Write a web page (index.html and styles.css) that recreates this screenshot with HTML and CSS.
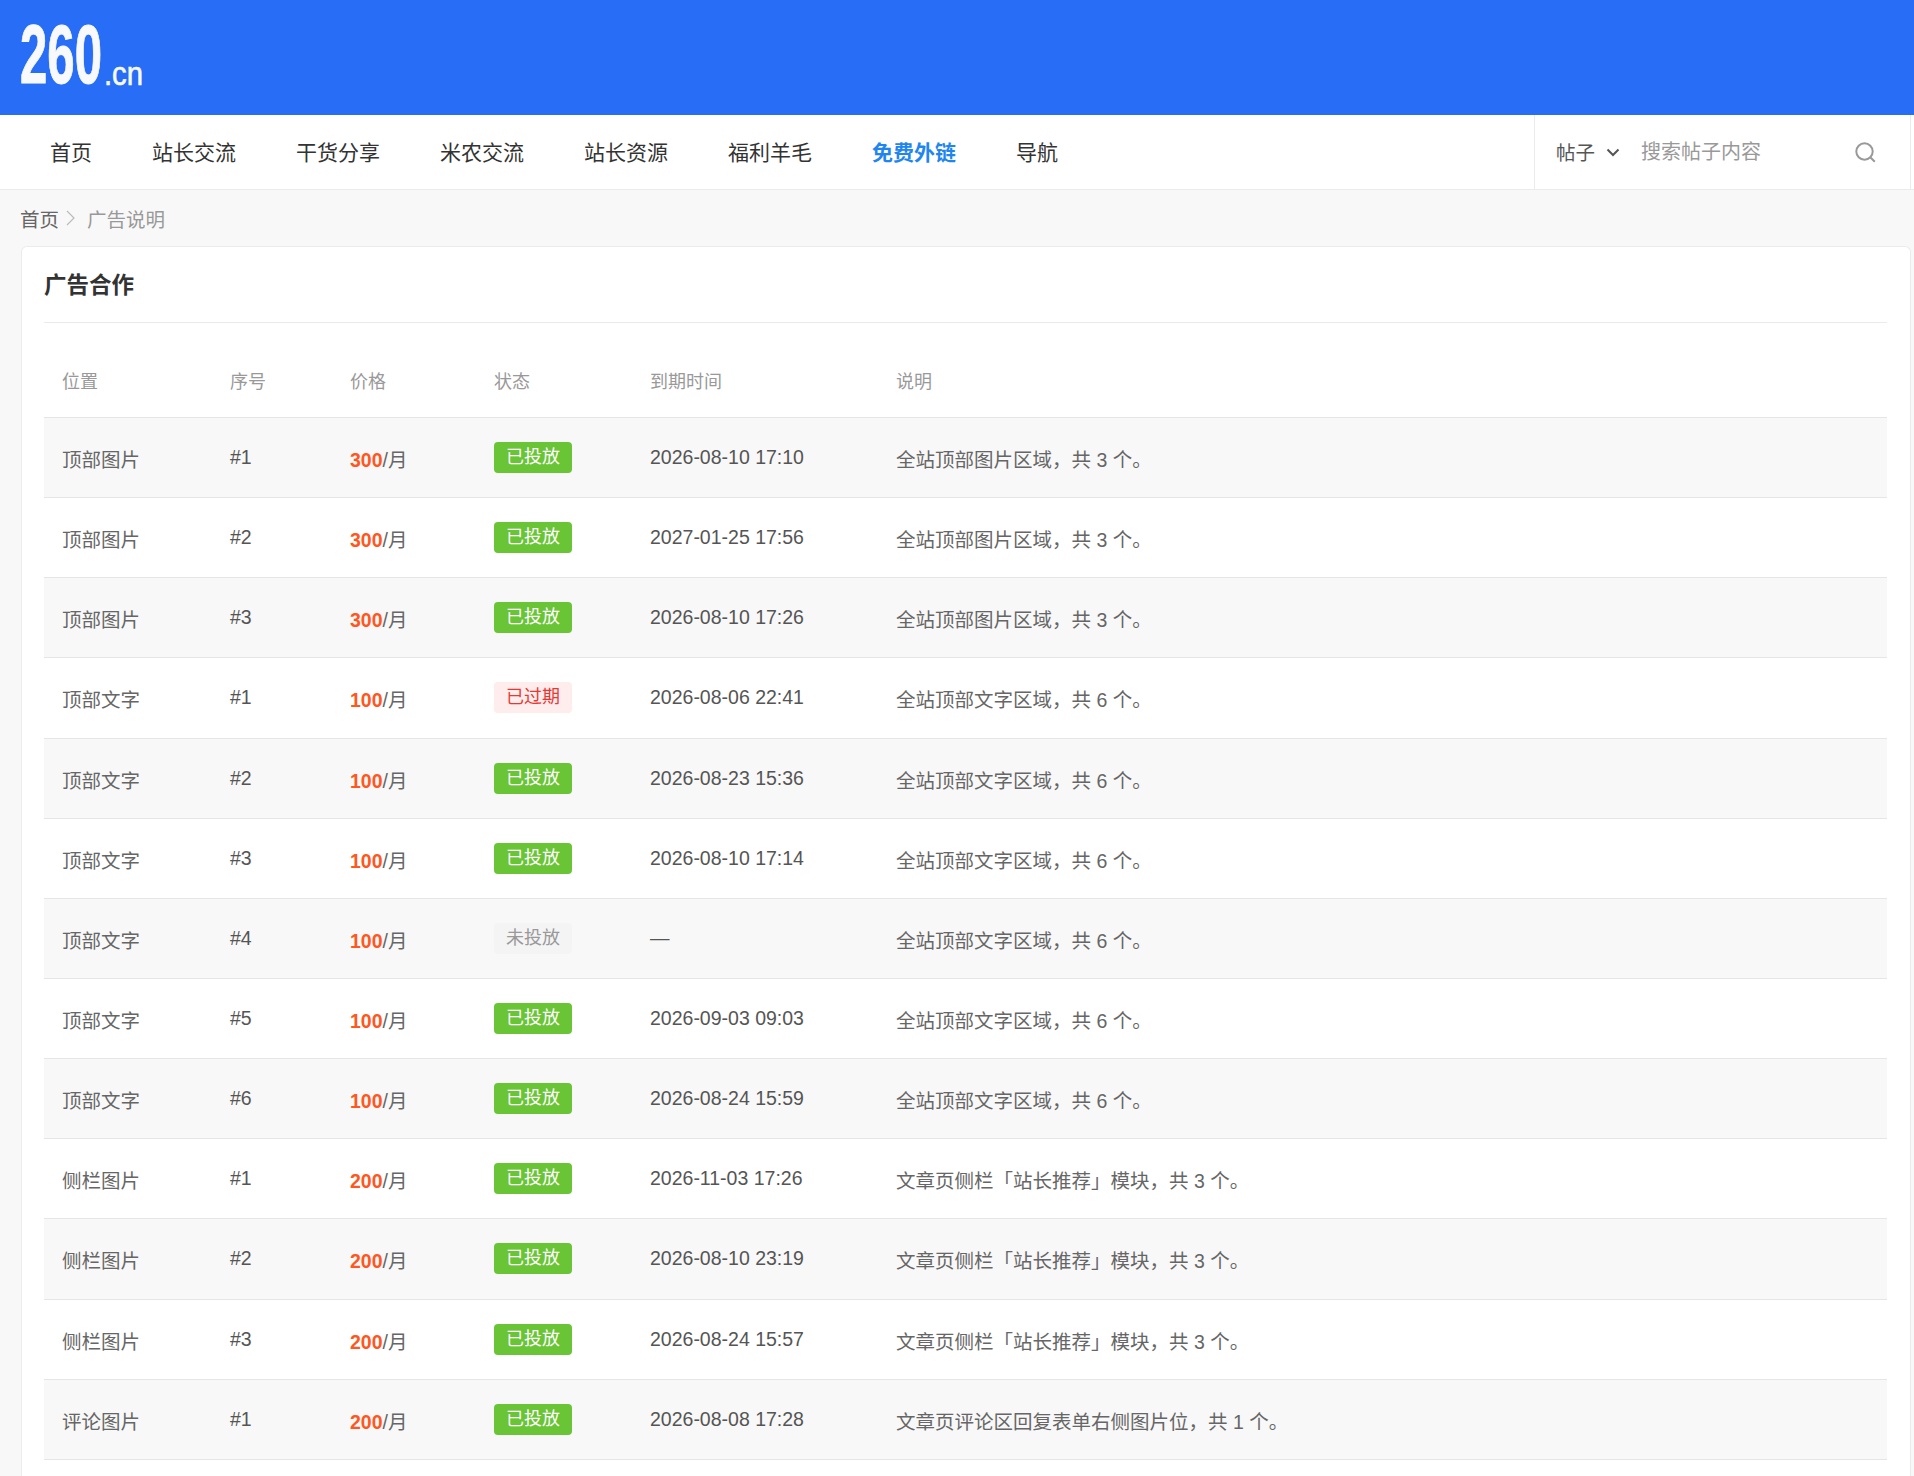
FILE: index.html
```html
<!DOCTYPE html>
<html lang="zh-CN">
<head>
  <meta charset="UTF-8">
  <title>广告合作</title>
  <link rel="stylesheet" href="styles.css">
</head>
<body>

<div class="top">
  <a class="logo"><span class="logo-num">260</span><span class="logo-cn">.cn</span></a>
</div>

<div class="nav">
  <div class="nav-list">
    <a>首页</a>
    <a>站长交流</a>
    <a>干货分享</a>
    <a>米农交流</a>
    <a>站长资源</a>
    <a>福利羊毛</a>
    <a class="active">免费外链</a>
    <a>导航</a>
  </div>
  <div class="search">
    <span class="search-type">帖子</span>
    <svg class="chevron" width="14" height="9" viewBox="0 0 14 9"><path d="M1.5 1.5 7 7l5.5-5.5" fill="none" stroke="#555" stroke-width="2"/></svg>
    <span class="search-input">搜索帖子内容</span>
    <svg class="search-icon" width="21" height="21" viewBox="0 0 21 21"><circle cx="9.5" cy="9.5" r="8.2" fill="none" stroke="#999" stroke-width="2"/><path d="m15.5 15.5 4.3 4.3" stroke="#999" stroke-width="2"/></svg>
  </div>
</div>

<div class="crumbs">
  <a>首页</a>
  <svg class="crumb-sep" width="9" height="16" viewBox="0 0 9 16"><path d="m1 1 7 7-7 7" fill="none" stroke="#bbb" stroke-width="1.2"/></svg>
  <span>广告说明</span>
</div>

<div class="card">
  <div class="card-title">广告合作</div>
  <table class="tbl-ads" cellpadding="0" cellspacing="0">
    <colgroup>
      <col class="c-pos"><col class="c-num"><col class="c-price"><col class="c-state"><col class="c-date"><col>
    </colgroup>
    <thead>
      <tr><th>位置</th><th>序号</th><th>价格</th><th>状态</th><th>到期时间</th><th>说明</th></tr>
    </thead>
    <tbody>
      <tr><td class="cjk">顶部图片</td><td>#1</td><td class="cjk"><b class="price">300</b>/月</td><td><span class="tag on">已投放</span></td><td>2026-08-10 17:10</td><td class="cjk">全站顶部图片区域，共 3 个。</td></tr>
      <tr><td class="cjk">顶部图片</td><td>#2</td><td class="cjk"><b class="price">300</b>/月</td><td><span class="tag on">已投放</span></td><td>2027-01-25 17:56</td><td class="cjk">全站顶部图片区域，共 3 个。</td></tr>
      <tr><td class="cjk">顶部图片</td><td>#3</td><td class="cjk"><b class="price">300</b>/月</td><td><span class="tag on">已投放</span></td><td>2026-08-10 17:26</td><td class="cjk">全站顶部图片区域，共 3 个。</td></tr>
      <tr><td class="cjk">顶部文字</td><td>#1</td><td class="cjk"><b class="price">100</b>/月</td><td><span class="tag off">已过期</span></td><td>2026-08-06 22:41</td><td class="cjk">全站顶部文字区域，共 6 个。</td></tr>
      <tr><td class="cjk">顶部文字</td><td>#2</td><td class="cjk"><b class="price">100</b>/月</td><td><span class="tag on">已投放</span></td><td>2026-08-23 15:36</td><td class="cjk">全站顶部文字区域，共 6 个。</td></tr>
      <tr><td class="cjk">顶部文字</td><td>#3</td><td class="cjk"><b class="price">100</b>/月</td><td><span class="tag on">已投放</span></td><td>2026-08-10 17:14</td><td class="cjk">全站顶部文字区域，共 6 个。</td></tr>
      <tr><td class="cjk">顶部文字</td><td>#4</td><td class="cjk"><b class="price">100</b>/月</td><td><span class="tag none">未投放</span></td><td>—</td><td class="cjk">全站顶部文字区域，共 6 个。</td></tr>
      <tr><td class="cjk">顶部文字</td><td>#5</td><td class="cjk"><b class="price">100</b>/月</td><td><span class="tag on">已投放</span></td><td>2026-09-03 09:03</td><td class="cjk">全站顶部文字区域，共 6 个。</td></tr>
      <tr><td class="cjk">顶部文字</td><td>#6</td><td class="cjk"><b class="price">100</b>/月</td><td><span class="tag on">已投放</span></td><td>2026-08-24 15:59</td><td class="cjk">全站顶部文字区域，共 6 个。</td></tr>
      <tr><td class="cjk">侧栏图片</td><td>#1</td><td class="cjk"><b class="price">200</b>/月</td><td><span class="tag on">已投放</span></td><td>2026-11-03 17:26</td><td class="cjk">文章页侧栏「站长推荐」模块，共 3 个。</td></tr>
      <tr><td class="cjk">侧栏图片</td><td>#2</td><td class="cjk"><b class="price">200</b>/月</td><td><span class="tag on">已投放</span></td><td>2026-08-10 23:19</td><td class="cjk">文章页侧栏「站长推荐」模块，共 3 个。</td></tr>
      <tr><td class="cjk">侧栏图片</td><td>#3</td><td class="cjk"><b class="price">200</b>/月</td><td><span class="tag on">已投放</span></td><td>2026-08-24 15:57</td><td class="cjk">文章页侧栏「站长推荐」模块，共 3 个。</td></tr>
      <tr><td class="cjk">评论图片</td><td>#1</td><td class="cjk"><b class="price">200</b>/月</td><td><span class="tag on">已投放</span></td><td>2026-08-08 17:28</td><td class="cjk">文章页评论区回复表单右侧图片位，共 1 个。</td></tr>
    </tbody>
  </table>
</div>

</body>
</html>
```

FILE: styles.css
```css
html, body {
  margin: 0;
  height: 1476px;
  overflow: hidden;
}
body {
  display: flex;
  flex-direction: column;
  background: #f8f8f8;
  color: #555;
  font-family: "Liberation Sans", "Noto Sans CJK SC", sans-serif;
  font-size: 19.5px;
}

.top {
  height: 115px;
  flex: none;
  background: #286df5;
  padding: 0 0 0 20px;
}
.logo {
  display: flex;
  color: #f8f9fb;
  font-weight: 700;
}
.logo-num {
  width: 84px;
  margin-top: 12px;
  font-size: 84px;
  line-height: 84px;
  -webkit-text-stroke: 1px #f8f9fb;
  transform: scaleX(0.585);
  transform-origin: left;
}
.logo-cn {
  margin-top: 55px;
  font-weight: 400;
  font-size: 34px;
  line-height: 36px;
  -webkit-text-stroke: 0.6px #f8f9fb;
  transform: scaleX(0.86);
  transform-origin: left;
}

.nav {
  height: 74px;
  flex: none;
  display: flex;
  justify-content: space-between;
  background: #fff;
  border-bottom: 1px solid #ebebeb;
  padding-right: 3px;
}
.nav-list {
  display: flex;
  align-items: center;
  gap: 60px;
  padding: 0 0 2px 50px;
  font-size: 21px;
  color: #333;
}
.nav-list .active {
  color: #1e86ee;
  font-weight: 700;
}
.search {
  width: 377px;
  box-sizing: border-box;
  display: flex;
  align-items: center;
  border-left: 1px solid #ebebeb;
  border-right: 1px solid #ebebeb;
  padding-left: 21px;
}
.search-type {
  color: #555;
  margin-bottom: 2px;
}
.chevron {
  margin-left: 11px;
}
.search-input {
  margin: 0 0 4px 21px;
  width: 214px;
  font-size: 20px;
  color: #999;
}

.crumbs {
  height: 56px;
  flex: none;
  box-sizing: border-box;
  display: flex;
  align-items: center;
  padding: 0 0 0 20px;
  color: #666;
}
.crumb-sep {
  margin: 0 12px 0 7px;
}
.crumbs span {
  color: #999;
}

.card {
  flex: 1;
  margin: 0 3px 0 21px;
  padding: 0 23px 0 22px;
  background: #fff;
  border: 1px solid #ebebeb;
  border-bottom: 0;
  border-radius: 6px 6px 0 0;
}
.card-title {
  height: 75px;
  line-height: 77px;
  border-bottom: 1px solid #ebebeb;
  font-size: 22.5px;
  font-weight: 700;
  color: #333;
}

.tbl-ads {
  width: 100%;
  table-layout: fixed;
  border-collapse: separate;
}
.c-pos { width: 168px; }
.c-num { width: 120px; }
.c-price { width: 144px; }
.c-state { width: 156px; }
.c-date { width: 246px; }

.tbl-ads th {
  box-sizing: border-box;
  height: 95px;
  padding: 19px 0 0 18px;
  text-align: left;
  font-size: 18px;
  font-weight: 400;
  color: #999;
  border-bottom: 1px solid #e5e5e5;
}
.tbl-ads td {
  box-sizing: border-box;
  height: 80.15px;
  padding: 0 0 0 18px;
  border-bottom: 1px solid #e5e5e5;
  white-space: nowrap;
}
.tbl-ads tbody tr:nth-child(odd) td {
  background: #f8f8f8;
}
.tbl-ads td.cjk {
  padding-top: 2px;
  color: #666;
}
.price {
  color: #ff5722;
}
.tag {
  display: inline-block;
  width: 78px;
  height: 31px;
  line-height: 30px;
  text-align: center;
  border-radius: 4px;
  font-size: 18px;
  vertical-align: middle;
}
.tag.on {
  background: #69c436;
  color: #fff;
}
.tag.off {
  background: #ffecec;
  color: #e53935;
}
.tag.none {
  background: #f4f4f5;
  color: #999;
}
```
